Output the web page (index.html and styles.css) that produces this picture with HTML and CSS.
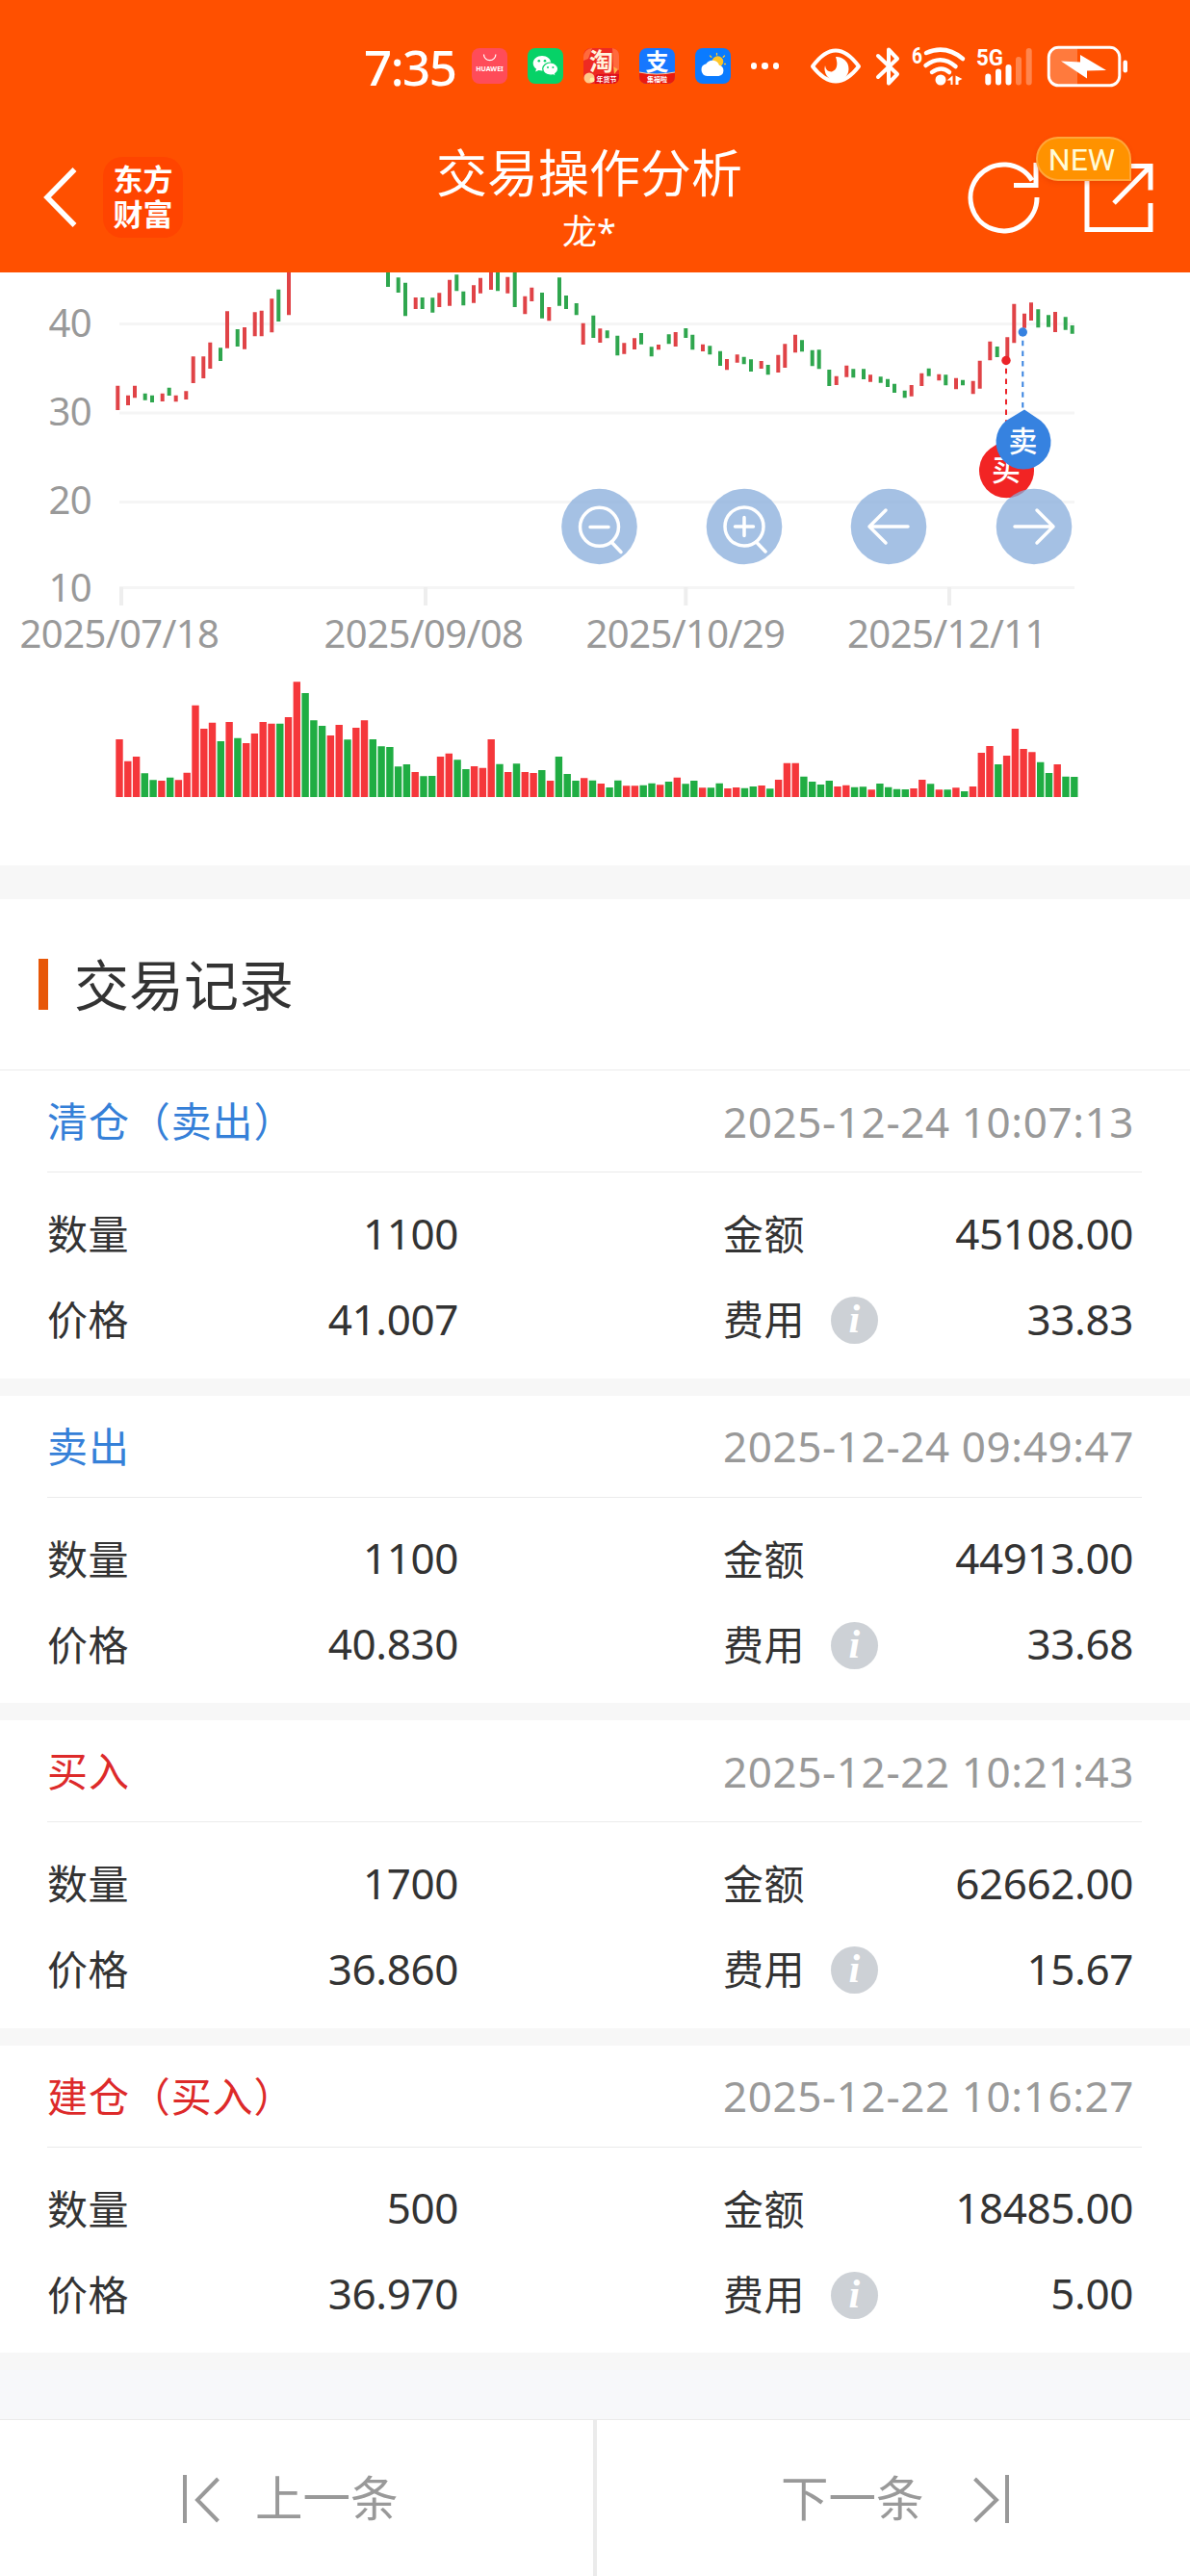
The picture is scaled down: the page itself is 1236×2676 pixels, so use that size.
FILE: index.html
```html
<!DOCTYPE html>
<html lang="zh-CN">
<head>
    <meta charset="UTF-8">
    <meta name="viewport" content="width=device-width, initial-scale=1.0">
    <title>交易操作分析</title>
    <link rel="stylesheet" href="styles.css">
</head>
<body>
    <header class="top">
        <div class="status-bar">
            <span class="clock">7:35</span>
            <div class="apps">
                <svg class="app" viewBox="0 0 37 37">
                    <rect width="37" height="37" rx="8" fill="#ff4c59"/>
                    <path d="M12.5 6.500a6.200 6.200 0 0 0 12.400 0" fill="none" stroke="#fff" stroke-width="1.200"/>
                    <text x="18.500" y="24" class="app-huawei">HUAWEI</text>
                </svg>
                <svg class="app" viewBox="0 0 37 37">
                    <rect width="37" height="37" rx="8" fill="#06d267"/>
                    <path d="M15 8c-5.200 0-9.300 3.400-9.300 7.700 0 2.400 1.300 4.500 3.300 5.900l-.8 3 3.300-1.700c1.100.3 2.300.5 3.500.5 5.100 0 9.300-3.400 9.300-7.700S20.100 8 15 8z" fill="#fff"/>
                    <path d="M23.700 15c-4.400 0-8 2.900-8 6.600s3.600 6.600 8 6.600c1 0 2-.1 2.900-.4l2.700 1.400-.7-2.500c1.900-1.200 3.100-3 3.100-5.100 0-3.700-3.600-6.600-8-6.600z" fill="#fff" stroke="#06d267" stroke-width="1.200"/>
                    <g fill="#06d267"><circle cx="11.800" cy="13.300" r="1.300"/><circle cx="18" cy="13.300" r="1.300"/><circle cx="21" cy="20" r="1"/><circle cx="26.400" cy="20" r="1"/></g>
                </svg>
                <svg class="app" viewBox="0 0 37 37">
                    <rect width="37" height="37" rx="8" fill="#ee2a22"/>
                    <path d="M0 9a9 9 0 0 1 9-9l-4 11-5 2zM30 0q7 1 7 8v15l-6-4z" fill="#ff6a3c"/>
                    <circle cx="6" cy="31" r="5.500" fill="#ffc98a"/>
                    <circle cx="9" cy="33" r="2.500" fill="#fff0a0"/>
                    <path d="M31 19l5 3-4 5z" fill="#ffb14a"/>
                    <text x="18.500" y="23" class="app-tao">淘</text>
                    <path d="M12 37v-6q0-4 4-4h21v3q0 7-7 7z" fill="#dd0f1c"/>
                    <text x="24" y="35" class="app-small">年货节</text>
                </svg>
                <svg class="app" viewBox="0 0 37 37">
                    <rect width="37" height="37" rx="8" fill="#1677ff"/>
                    <text x="18.500" y="22.500" class="app-zhi">支</text>
                    <path d="M0 25q18 4 37 0v4q0 8-8 8H8q-8 0-8-8z" fill="#ea1a10"/>
                    <path d="M0 25q18 4 37 0" fill="none" stroke="#ffd0a0" stroke-width="1.200"/>
                    <text x="18.500" y="35" class="app-small">集福啦</text>
                </svg>
                <svg class="app" viewBox="0 0 37 37">
                    <rect width="37" height="37" rx="8" fill="#0a7bff"/>
                    <circle cx="23.500" cy="14" r="5.800" fill="#ffc629"/>
                    <path d="M22.500 5.500v1.500M15.500 8l1.300 1.300M30.500 8l-1.300 1.300M31.500 16.500h-1" stroke="#ffc629" stroke-width="1.300" stroke-linecap="round"/>
                    <path d="M12.500 29a6.500 6.500 0 0 1-1-12.800 7.500 7.500 0 0 1 13.500 1.600A5.700 5.700 0 0 1 24.500 29z" fill="#fff"/>
                </svg>
            </div>
            <span class="more"><i></i><i></i><i></i></span>
            <svg class="system" viewBox="840 40 340 56">
                <g fill="none" stroke="#fff" stroke-linecap="round" stroke-linejoin="round">
                    <path d="M844 68q24-33 48 0q-24 31-48 0z" stroke-width="4"/>
                    <path d="M912 57l20 19-9 9.500V50.500l9 9.500-20 19" stroke-width="4"/>
                    <path d="M962 54q20-9 38 6M961.500 67q16-12 31 1M968 74q10-7 18 0" stroke-width="4.500"/>
                </g>
                <path d="M868 58a12.500 12.500 0 1 1-11 9q1 7 7 6.500 8-3 4-15.500z" fill="#fff"/>
                <circle cx="977" cy="82" r="5.500" fill="#fff"/>
                <path d="M983.500 82.500l6-5v9.500h-2v-4.500zM992.500 87v-9.500l7 3.500-4 2v4z" fill="#fff"/>
                <text x="947" y="65" class="sys-text" textLength="11" lengthAdjust="spacingAndGlyphs">6</text>
                <text x="1014" y="67" class="sys-text" textLength="28" lengthAdjust="spacingAndGlyphs">5G</text>
                <g stroke="#fff" stroke-width="6" stroke-linecap="round">
                    <path d="M1026.300 78.500v6M1037 73.500v11M1047.500 69v15.500"/>
                    <path d="M1058 61v23.500M1068.700 52v32.500" opacity=".3"/>
                </g>
                <path d="M1091 57q0-8 8-8h20v38h-20q-8 0-8-8z" fill="#ff7a3d"/>
                <rect x="1089.300" y="48.300" width="73.500" height="39.500" rx="10" fill="none" stroke="#fff" stroke-width="3"/>
                <rect x="1166.500" y="61.500" width="4.500" height="13" rx="2.200" fill="#fff"/>
                <path d="M1102 62.500l20 1V56l27 16-20 .5v8z" fill="#fff"/>
            </svg>
        </div>
        <nav class="nav">
            <div class="nav-left">
                <svg class="back" viewBox="0 0 36 64"><path d="M32.500 3L4 32l28.500 29" fill="none" stroke="#fff" stroke-width="5.500"/></svg>
                <div class="logo"><span>东方</span><span>财富</span></div>
            </div>
            <div class="nav-title">
                <h1>交易操作分析</h1>
                <p>龙*</p>
            </div>
            <div class="nav-right">
                <svg class="refresh" viewBox="0 0 76 76">
                    <path d="M73 38A34.500 34.500 0 1 1 68 20.500M72 2v23.500H49" fill="none" stroke="#fff" stroke-width="5"/>
                </svg>
                <div class="share">
                    <svg viewBox="0 0 72 72">
                        <path d="M30 2.500H3v66h66V41M46 2.500h23v25M69 2.500L31 41" fill="none" stroke="#fff" stroke-width="5"/>
                    </svg>
                    <span class="badge">NEW</span>
                </div>
            </div>
        </nav>
    </header>

    <section class="chart">
        <svg viewBox="0 283 1236 616">
            <g class="grid">
                <path d="M124 336.500h992M124 429h992M124 521.500h992M124 610.500h992"/>
                <path d="M126 610v19M442 610v19M712.300 610v19M986 610v19" class="tick"/>
            </g>
            <g class="axis axis-y">
                <text x="95" y="350">40</text>
                <text x="95" y="441.500">30</text>
                <text x="95" y="533.500">20</text>
                <text x="95" y="624.500">10</text>
            </g>
            <g class="axis axis-x">
                <text x="124" y="672.500">2025/07/18</text>
                <text x="440" y="672.500">2025/09/08</text>
                <text x="712" y="672.500">2025/10/29</text>
                <text x="983.500" y="672.500">2025/12/11</text>
            </g>
            <path id="candles-up" class="candle up"/>
            <path id="candles-down" class="candle down"/>
            <path id="volume-up" class="volume up"/>
            <path id="volume-down" class="volume down"/>

            <!-- 买卖点 -->
            <path d="M1045 379v64" class="link link-buy"/>
            <path d="M1062.300 350v76" class="link link-sell"/>
            <circle cx="1045" cy="374.500" r="4.700" fill="#eb2328"/>
            <circle cx="1062.300" cy="345" r="4.700" fill="#3682e0"/>
            <path d="M1045.500 455l17 11a28.500 28.500 0 1 1-34 0z" fill="#f22424"/>
            <text x="1045" y="499" class="pin">买</text>
            <path d="M1064 425.500l17 11.500a28.500 28.500 0 1 1-36 0z" fill="#3682e0"/>
            <text x="1062.500" y="469" class="pin">卖</text>

            <g fill="#85abda" fill-opacity=".74">
                <circle cx="622.500" cy="547" r="39.300"/>
                <circle cx="773" cy="547" r="39.300"/>
                <circle cx="923" cy="547" r="39.300"/>
                <circle cx="1074" cy="547" r="39.300"/>
            </g>
            <g fill="none" stroke="#fff" stroke-width="3.500" stroke-linecap="round" stroke-linejoin="round">
                <circle cx="622.500" cy="547.300" r="20"/>
                <path d="M613 547.500h19M635.500 563.500l9.500 10"/>
                <circle cx="773" cy="547" r="20"/>
                <path d="M763.500 547h19M773 537.500v19M785.500 563l9.500 10"/>
                <path d="M943 547h-40M920 530l-17 17 17 17"/>
                <path d="M1054 547h40M1077 530l17 17-17 17"/>
            </g>
        </svg>
    </section>

    <section class="records">
        <h2>交易记录</h2>

        <article class="record sell">
            <div class="record-head"><h3>清仓（卖出）</h3><time>2025-12-24 10:07:13</time></div>
            <dl>
                <div><dt>数量</dt><dd>1100</dd></div>
                <div><dt>金额</dt><dd>45108.00</dd></div>
                <div><dt>价格</dt><dd>41.007</dd></div>
                <div><dt>费用<i class="info">i</i></dt><dd>33.83</dd></div>
            </dl>
        </article>

        <article class="record sell">
            <div class="record-head"><h3>卖出</h3><time>2025-12-24 09:49:47</time></div>
            <dl>
                <div><dt>数量</dt><dd>1100</dd></div>
                <div><dt>金额</dt><dd>44913.00</dd></div>
                <div><dt>价格</dt><dd>40.830</dd></div>
                <div><dt>费用<i class="info">i</i></dt><dd>33.68</dd></div>
            </dl>
        </article>

        <article class="record buy">
            <div class="record-head"><h3>买入</h3><time>2025-12-22 10:21:43</time></div>
            <dl>
                <div><dt>数量</dt><dd>1700</dd></div>
                <div><dt>金额</dt><dd>62662.00</dd></div>
                <div><dt>价格</dt><dd>36.860</dd></div>
                <div><dt>费用<i class="info">i</i></dt><dd>15.67</dd></div>
            </dl>
        </article>

        <article class="record buy">
            <div class="record-head"><h3>建仓（买入）</h3><time>2025-12-22 10:16:27</time></div>
            <dl>
                <div><dt>数量</dt><dd>500</dd></div>
                <div><dt>金额</dt><dd>18485.00</dd></div>
                <div><dt>价格</dt><dd>36.970</dd></div>
                <div><dt>费用<i class="info">i</i></dt><dd>5.00</dd></div>
            </dl>
        </article>
    </section>

    <footer class="pager">
        <a class="prev">
            <svg viewBox="0 0 40 52"><path d="M2 1v50M36.500 5L15 27l21.500 22" fill="none" stroke="#999" stroke-width="4"/></svg>
            <span>上一条</span>
        </a>
        <a class="next">
            <span>下一条</span>
            <svg viewBox="0 0 40 52"><path d="M38 1v50M4.500 5L27 27 4.500 49" fill="none" stroke="#999" stroke-width="4"/></svg>
        </a>
    </footer>
    <script src="chart.js"></script>
</body>
</html>
```

FILE: styles.css
```css
* {
    box-sizing: border-box;
    margin: 0;
    padding: 0;
}

body {
    width: 1236px;
    min-height: 2676px;
    display: flex;
    flex-direction: column;
    background-color: #fff;
    color: #333;
    font-family: "Noto Sans", "Noto Sans CJK SC", sans-serif;
}

h1, h2, h3 {
    font-weight: 400;
}

i {
    font-style: normal;
}

svg {
    display: block;
}

/* 顶部 */
.top {
    height: 283px;
    background-color: #ff5000;
    color: #fff;
}

.status-bar {
    height: 137px;
    padding-left: 378px;
    display: flex;
    align-items: center;
}

.clock {
    width: 112px;
    font-size: 51px;
    font-weight: 500;
    letter-spacing: -1.5px;
    line-height: 60px;
}

.apps {
    display: flex;
    gap: 21px;
}

.app {
    width: 37px;
    height: 37px;
}

.app text {
    fill: #fff;
    text-anchor: middle;
}

.app-huawei {
    font: 700 7px "Noto Sans", sans-serif;
}

.app .app-tao {
    font: 700 25px "Noto Sans CJK SC", sans-serif;
    fill: #fff3dc;
}

.app-zhi {
    font: 700 24px "Noto Sans CJK SC", sans-serif;
}

.app-small {
    font: 700 7px "Noto Sans CJK SC", sans-serif;
}

.more {
    display: flex;
    gap: 5px;
    margin-left: 21px;
}

.more i {
    width: 6.3px;
    height: 6.3px;
    border-radius: 50%;
    background-color: #fff;
}

.system {
    width: 340px;
    height: 56px;
    margin-left: 31px;
}

.sys-text {
    font: 700 24px Roboto, sans-serif;
    fill: #fff;
}

.nav {
    height: 146px;
    padding: 5px 38px 0 45px;
    display: grid;
    grid-template-columns: 387px 360px 1fr;
}

.nav-left {
    display: flex;
    align-items: center;
    gap: 26px;
    height: 126px;
}

.back {
    width: 36px;
    height: 64px;
}

.logo {
    width: 83px;
    height: 84px;
    padding-bottom: 4px;
    border-radius: 20px;
    background-color: #ff4400;
    display: flex;
    flex-direction: column;
    align-items: center;
    justify-content: center;
    font: 700 31px/36px "Noto Sans CJK SC", sans-serif;
}

.nav-title {
    text-align: center;
}

.nav-title h1 {
    margin-top: 4px;
    font-size: 53px;
    line-height: 68px;
}

.nav-title p {
    margin-top: 5px;
    font-size: 36px;
    line-height: 44px;
}

.nav-right {
    display: flex;
    justify-content: flex-end;
    gap: 46px;
    padding-top: 25px;
}

.refresh {
    width: 76px;
    height: 76px;
}

.share {
    position: relative;
    width: 72px;
    height: 72px;
    margin-top: 3px;
}

.badge {
    position: absolute;
    left: -50px;
    top: -28px;
    width: 99px;
    height: 46px;
    padding-right: 4px;
    border: 2px solid #ffa63a;
    border-radius: 23px 23px 0 23px;
    background-color: #ff9200;
    box-shadow: 0 2px 5px rgba(200, 50, 0, 0.3);
    color: #fffbd8;
    font: 32px/45px Roboto, sans-serif;
    text-align: center;
}

/* 行情图 */
.chart {
    height: 616px;
}

.grid {
    fill: none;
    stroke: #f5f5f5;
    stroke-width: 3;
}

.grid .tick {
    stroke: #eee;
    stroke-width: 4;
}

.axis {
    font-size: 40px;
    fill: #999;
    letter-spacing: -0.6px;
}

.axis-x {
    text-anchor: middle;
}

.axis-y {
    text-anchor: end;
}

.candle {
    stroke-width: 4;
}

.candle.up {
    stroke: #e04347;
}

.candle.down {
    stroke: #2fa64e;
}

.volume {
    stroke-width: 7.4;
}

.volume.up {
    stroke: #f5373b;
}

.volume.down {
    stroke: #20ad43;
}

.link {
    stroke-width: 2;
    stroke-dasharray: 5.5 5.2;
    stroke-dashoffset: 7;
}

.link-buy {
    stroke: #eb2328;
}

.link-sell {
    stroke: #3682e0;
}

.pin {
    font: 500 30px "Noto Sans CJK SC", sans-serif;
    fill: #fff;
    text-anchor: middle;
}

/* 交易记录 */
.records {
    border-top: 35px solid #f7f7f7;
    background-color: #fff;
}

.records h2 {
    height: 178px;
    display: flex;
    align-items: center;
    padding: 0 0 5px 40px;
    border-bottom: 1px solid #ebebeb;
    font-size: 57px;
}

.records h2::before {
    content: "";
    width: 10px;
    height: 53px;
    margin: 5px 27px 0 0;
    background-color: #e75708;
}

.record {
    height: 337.500px;
    border-bottom: 18px solid #f7f7f7;
}

.record-head {
    height: 106px;
    margin: 0 50px 0 49px;
    padding-right: 9px;
    display: flex;
    align-items: center;
    justify-content: space-between;
    border-bottom: 1px solid #ebebeb;
}

.record-head h3 {
    padding-bottom: 4px;
    font-size: 42px;
    letter-spacing: 0.9px;
}

.sell h3 {
    color: #3580d8;
}

.buy h3 {
    color: #dd2a2a;
}

.record-head time {
    width: 426px;
    font-size: 44px;
    letter-spacing: 0.6px;
    color: #999;
    white-space: nowrap;
}

.record dl {
    padding: 18px 59px 0 49px;
    display: grid;
    grid-template-columns: 427px 426px;
    justify-content: space-between;
}

.record dl div {
    height: 89px;
    display: flex;
    align-items: center;
    justify-content: space-between;
}

.record dt {
    display: flex;
    align-items: center;
    padding-bottom: 2px;
    font-size: 42px;
    letter-spacing: 0.5px;
}

.record dd {
    font-size: 44px;
    letter-spacing: -0.4px;
}

.info {
    width: 49px;
    height: 49px;
    margin: 6px 0 0 27px;
    border-radius: 50%;
    background-color: #cdd1d6;
    color: #fff;
    font: italic 700 42px/46px "Liberation Serif", serif;
    text-align: center;
}

/* 底部翻页 */
.pager {
    flex: 1;
    display: flex;
    border-top: 51px solid #f7f8fa;
    color: #999;
    font-size: 49.5px;
}

.pager a {
    height: 163px;
    padding-top: 2px;
    display: flex;
    align-items: center;
    border-top: 1px solid #ebebeb;
}

.pager span {
    padding-bottom: 6px;
}

.pager svg {
    width: 40px;
    height: 52px;
}

.pager .prev {
    width: 620px;
    border-right: 4px solid #ebebeb;
    padding-left: 190px;
    gap: 35px;
}

.pager .next {
    flex: 1;
    padding-left: 191px;
    gap: 48px;
}
```

FILE: chart.js
```js
// K线: [x, 最高, 最低, 1 涨 / 0 跌]
const candles = [
    [122.3, 400.7, 426, 1], [133, 410.7, 421, 1], [140, 400.7, 413.3, 1], [150.7, 408.7, 415.7, 0],
    [158, 410.7, 418, 0], [168.7, 408.7, 417, 1], [175.7, 402.7, 411, 0], [182.7, 410.7, 417.3, 1],
    [193.3, 406.3, 415, 1], [200.7, 370.3, 398, 1], [211.3, 370.3, 393, 1], [218.3, 355.7, 383, 1],
    [229, 361.3, 375, 0], [236, 323.3, 361.7, 1], [246.7, 342, 360, 0], [254, 340, 362.7, 1],
    [264.7, 324.3, 349.3, 1], [271.7, 322.7, 349.3, 1], [282.3, 310.3, 345.3, 1], [289.3, 300.7, 334, 0],
    [300, 283, 327.3, 1], [403, 283, 298, 0], [413.7, 288.3, 304, 0], [421, 293.7, 328.3, 0],
    [431.7, 309, 321, 1], [438.7, 309, 321, 0], [449.3, 309.3, 324.7, 0], [456.3, 304.3, 319, 1],
    [467, 290.7, 317.7, 1], [474.3, 285.3, 302.3, 0], [481.3, 302.7, 317.3, 0], [492, 296.3, 314.7, 1],
    [499, 288.7, 304.7, 1], [510, 283, 301, 1], [517, 283, 302.3, 0], [527.3, 287.7, 304.7, 1],
    [534.7, 283, 319, 0], [545.3, 307.7, 326.3, 1], [552.3, 298.7, 313, 1], [563, 304, 330.7, 0],
    [570.3, 319, 333.3, 1], [581, 288.3, 317.7, 0], [588, 307, 321, 0], [598.7, 315, 327.3, 0],
    [605.7, 335.7, 358, 1], [616.3, 327.7, 351, 0], [623.3, 341.3, 356, 1], [630.7, 343.3, 351.3, 0],
    [641.3, 348.7, 369.3, 0], [648.3, 356.3, 367.7, 1], [659, 351.3, 363, 1], [666, 346, 357.7, 0],
    [676.7, 360.3, 370.3, 0], [684, 358, 363.3, 1], [694.7, 347.3, 357.3, 0], [701.7, 345, 360, 1],
    [712.3, 341, 351, 0], [719.3, 347.7, 363.3, 0], [730, 357.7, 365, 1], [737.3, 359.3, 368.3, 0],
    [748, 364.7, 380, 0], [755, 373, 384.3, 1], [765.7, 368.3, 376.7, 1], [772.7, 370.7, 378.3, 0],
    [780, 373.3, 386, 0], [790.7, 375, 383, 1], [797.7, 379, 389.3, 0], [808.3, 368.7, 387, 1],
    [815.3, 357.3, 382, 1], [826, 347.7, 366.3, 1], [833, 353.3, 365.3, 0], [843.7, 363.7, 380.3, 0],
    [850.7, 363.3, 383.3, 0], [861.3, 384, 401, 0], [868.7, 390.7, 400, 1], [879.3, 379.7, 391.7, 1],
    [886.3, 383.3, 392.3, 0], [897, 383.3, 394, 0], [904, 389.3, 396.7, 1], [914.7, 391.3, 397.7, 0],
    [922, 393.7, 402, 0], [929, 398.7, 408, 0], [939.7, 405.7, 413.3, 0], [946.7, 400, 411.7, 1],
    [957.3, 387.7, 401, 1], [964.7, 382.7, 390.7, 0], [975.3, 388.7, 395.3, 1], [982.3, 389.3, 400.3, 0],
    [993, 392.7, 404.3, 1], [1000, 394.7, 400.3, 0], [1010.7, 395.7, 409.3, 1], [1017.7, 374.7, 403.7, 1],
    [1028.3, 354.7, 374.3, 1], [1035.7, 360, 371, 0], [1046.3, 350.3, 371, 1], [1053.3, 315.7, 356.3, 1],
    [1064, 325.7, 340.7, 1], [1071, 314.3, 333, 1], [1078.3, 321.3, 340.3, 0], [1089, 327.3, 339.7, 0],
    [1096, 324, 345, 1], [1106.7, 329.3, 342.7, 0], [1113.7, 338, 346.7, 0]
];

// 成交量: 正数为涨, 负数为跌
const volumes = [
    60, 37.3, 42, -24.7, -17.7, 17, -20.3, 17.7, 25.3, 95.3, 71, 77.3, -58, 78, -61.3, 56, 66, 78, 76.3,
    -76.3, 83, 119.7, -108, -79.7, -74, 64, 75, -59.7, 72, 79.7, -60, -52.7, -52, -31.7, -34, 26, -21.7,
    -22, 42, 45.3, -38.7, -29, 32, 30.3, 60, -34.3, 26, -34.7, 26, 25, -28, 17, -42, -24, -17, 19.7, -17.3,
    14, -10, -17.3, 11.7, 11.7, -12.3, -14.3, 12.7, -16, 20.3, -13.7, -17, 9.7, -9.7, -14.3, 9, 10, -9.3,
    -11, 12, -8.7, 18, 35.3, 35.3, -21.3, -16, -13, -17, 11, 12.3, -10.3, -10.7, 7.7, -14, -10.3, -8.3, -8,
    9, 18, -13.7, 7.7, -7.7, 9.7, -6, 11, 46, 53, -34, 43, 71, 50, 46.7, -36.3, -25, 34, -21.3, -21
];

function draw(id, d) {
    document.getElementById(id).setAttribute('d', d.join(''));
}

const line = ([x, high, low]) => `M${x} ${high}V${low}`;
draw('candles-up', candles.filter(c => c[3]).map(line));
draw('candles-down', candles.filter(c => !c[3]).map(line));

const up = [];
const down = [];
volumes.forEach((v, i) => {
    const x = (124 + i * 8.777).toFixed(1);
    (v > 0 ? up : down).push(`M${x} 828v${-Math.abs(v)}`);
});
draw('volume-up', up);
draw('volume-down', down);
```
